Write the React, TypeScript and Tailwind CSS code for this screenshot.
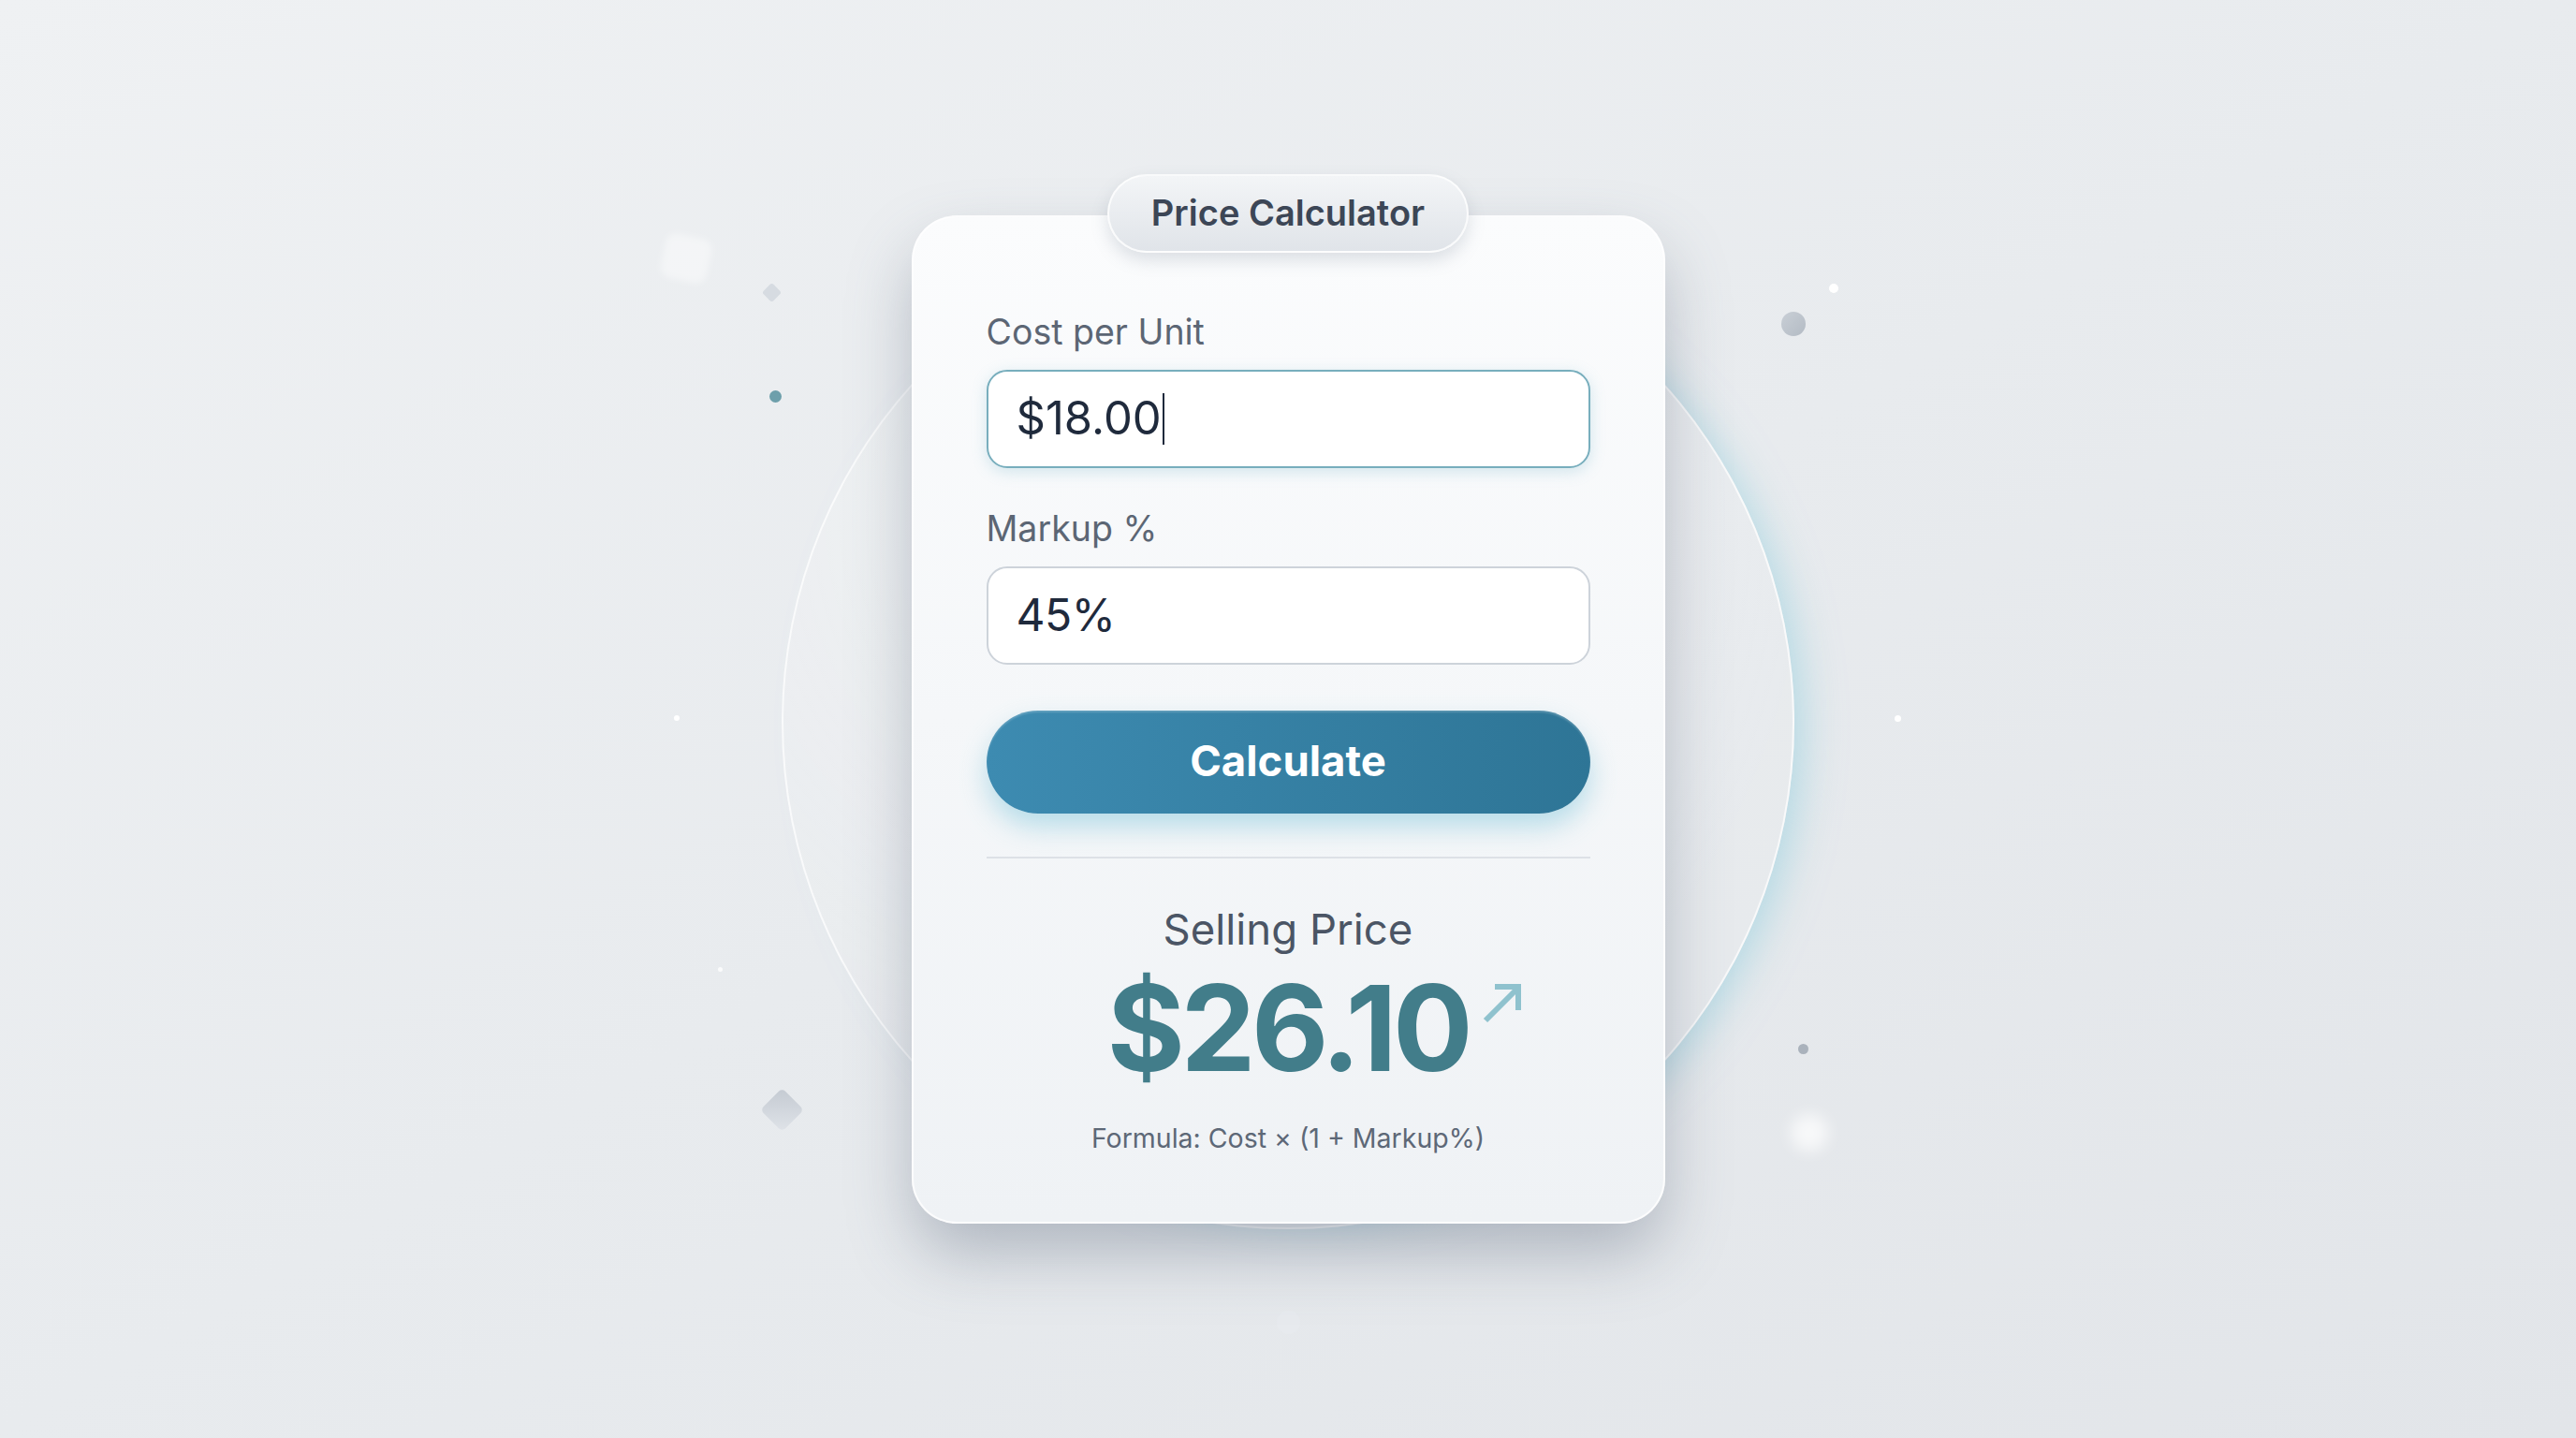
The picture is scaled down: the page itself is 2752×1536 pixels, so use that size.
// Decoraciones del fondo (puntos, rombos, brillos)
function Backdrop() {
  return (
    <>
      {/* círculo de cristal detrás de la tarjeta */}
      <div className="absolute left-[835px] top-[231px] w-[1082px] h-[1082px] rounded-full border-2 border-white/70 bg-[radial-gradient(circle_at_35%_30%,rgba(255,255,255,0.25),rgba(255,255,255,0.05)_70%)] shadow-[26px_6px_44px_-18px_rgba(140,205,222,0.6)]" />

      <div className="absolute left-[708px] top-[252px] w-[50px] h-[48px] rounded-xl rotate-12 bg-white/40 blur-[3px]" />
      <div className="absolute left-[817px] top-[305px] w-[15px] h-[15px] rotate-45 rounded-[3px] bg-[#d6dbe1]" />
      <div className="absolute left-[822px] top-[417px] w-[13px] h-[13px] rounded-full bg-[#6d9fab]" />
      <div className="absolute left-[720px] top-[764px] w-[6px] h-[6px] rounded-full bg-white" />
      <div className="absolute left-[767px] top-[1033px] w-[5px] h-[5px] rounded-full bg-white/80" />
      <div className="absolute left-[819px] top-[1169px] w-[33px] h-[33px] rotate-45 rounded-[5px] bg-gradient-to-br from-[#c4cad2] to-[#dfe3e8]" />

      <div className="absolute left-[1954px] top-[303px] w-[10px] h-[10px] rounded-full bg-white" />
      <div className="absolute left-[1903px] top-[333px] w-[26px] h-[26px] rounded-full bg-gradient-to-br from-[#c9cfd6] to-[#b3bbc4]" />
      <div className="absolute left-[2024px] top-[764px] w-[7px] h-[7px] rounded-full bg-white" />
      <div className="absolute left-[1921px] top-[1115px] w-[11px] h-[11px] rounded-full bg-[#aab2bc]" />
      <div className="absolute left-[1913px] top-[1190px] w-[40px] h-[40px] rounded-full bg-white/70 blur-[8px]" />
      <div className="absolute left-[1364px] top-[1400px] w-[25px] h-[25px] rounded-full bg-[#e7eaee]" />
    </>
  );
}

function ArrowMark() {
  return (
    <svg
      className="absolute left-[calc(100%+14px)] top-[14px] w-[44px] h-[44px]"
      viewBox="0 0 44 44"
      fill="none"
      stroke="#8fc2ce"
      strokeWidth={6}
      strokeLinecap="butt"
    >
      <path d="M4 41 L39 6" />
      <path d="M14 5 H39 V30" />
    </svg>
  );
}

export default function App() {
  return (
    <div
      className="relative w-full h-[1536px] overflow-hidden flex items-center justify-center bg-gradient-to-br from-[#eff1f3] via-[#e8ebee] to-[#e2e5e9]"
      style={{ fontFamily: 'Inter, "Noto Sans", sans-serif' }}
    >
      <Backdrop />

      {/* Tarjeta principal */}
      <div className="relative w-[805px] rounded-[48px] border-2 border-white/80 bg-gradient-to-b from-[#fbfcfd] to-[#eff2f5] shadow-[0_34px_70px_-4px_rgba(90,102,122,0.4)] px-[78px] pt-[101px] pb-[72px] flex flex-col">
        <div className="absolute left-1/2 -translate-x-1/2 -top-[46px] w-[386px] h-[84px] rounded-full border-2 border-white/80 bg-gradient-to-b from-[#f3f5f7] to-[#e0e4e9] shadow-[0_8px_18px_rgba(110,122,142,0.22)] flex items-center justify-center">
          <span className="text-[38px] font-semibold text-[#3c4656]">Price Calculator</span>
        </div>

        <label className="text-[37.5px] leading-[44px] text-[#5c6674]">Cost per Unit</label>
        <div className="mt-[18px] h-[105px] shrink-0 rounded-[22px] border-2 border-[#78aebd] bg-white px-[30px] flex items-center shadow-[0_4px_16px_rgba(110,180,200,0.28)]">
          <span className="text-[49px] text-[#1f2a3c]">$18.00</span>
          <span className="ml-[1px] w-[2px] h-[55px] bg-[#1f2a3c]" />
        </div>

        <label className="mt-[43px] text-[37.5px] leading-[44px] text-[#5c6674]">Markup %</label>
        <div className="mt-[18px] h-[105px] shrink-0 rounded-[22px] border-2 border-[#cdd3da] bg-white px-[30px] flex items-center">
          <span className="text-[48px] tracking-[-0.01em] text-[#1f2a3c]">45%</span>
        </div>

        <button className="mt-[49px] w-full h-[110px] shrink-0 rounded-full bg-gradient-to-r from-[#3d8bb1] to-[#2e7596] text-white text-[45.5px] font-bold shadow-[0_14px_28px_rgba(110,190,215,0.45),inset_0_2px_2px_rgba(255,255,255,0.2)]">
          Calculate
        </button>

        <div className="mt-[46px] h-[2px] shrink-0 bg-[#dde1e6]" />

        <div className="mt-[50px] text-center text-[45.5px] leading-[52px] text-[#4b5565]">Selling Price</div>

        <div className="mt-[16px] flex justify-center">
          <div className="relative text-[127px] leading-none font-bold tracking-[-0.035em] text-[#427d8a]">
            $26.10
            <ArrowMark />
          </div>
        </div>

        <div className="mt-[37px] text-center text-[28.5px] leading-[34px] text-[#5d6877]">
          Formula: Cost × (1 + Markup%)
        </div>
      </div>
    </div>
  );
}
